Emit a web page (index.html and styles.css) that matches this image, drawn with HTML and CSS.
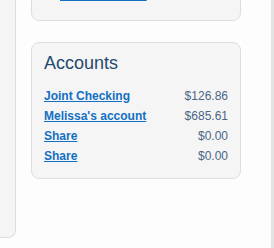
FILE: index.html
```html
<!DOCTYPE html>
<html>
<head>
<meta charset="utf-8">
<link rel="stylesheet" href="styles.css">
</head>
<body>
<div class="page">
  <aside class="sidebar"></aside>
  <main class="main">
    <section class="card card-top">
      <a class="link" href="#">Transfer Funds</a>
    </section>
    <section class="card accounts">
      <h2 class="title">Accounts</h2>
      <ul class="list">
        <li class="row"><a class="link" href="#">Joint Checking</a><span class="amount">$126.86</span></li>
        <li class="row"><a class="link" href="#">Melissa's account</a><span class="amount">$685.61</span></li>
        <li class="row"><a class="link" href="#">Share</a><span class="amount">$0.00</span></li>
        <li class="row"><a class="link" href="#">Share</a><span class="amount">$0.00</span></li>
      </ul>
    </section>
  </main>
  <div class="edge"></div>
</div>
</body>
</html>
```
FILE: styles.css
```css
html, body {
  margin: 0;
  padding: 0;
  background: #fdfdfd;
}
body {
  font-family: "Liberation Sans", Arial, Helvetica, sans-serif;
  width: 274px;
  height: 248px;
  overflow: hidden;
}
.page {
  display: flex;
  align-items: flex-start;
  height: 248px;
}
.sidebar {
  width: 15px;
  height: 237px;
  background: #f5f5f5;
  border-right: 1px solid #dcdcdc;
  border-bottom: 1px solid #dcdcdc;
  border-bottom-right-radius: 8px;
  flex: none;
}
.main {
  width: 210px;
  margin-left: 15px;
  flex: none;
}
.card {
  background: #f5f5f5;
  border: 1px solid #dedede;
  border-radius: 8px;
  box-sizing: border-box;
}
.card-top {
  margin-top: -27px;
  padding: 11px 12px 15px 28px;
  line-height: 20px;
  font-size: 12px;
}
.accounts {
  margin-top: 21px;
  padding: 10px 12px 12px 12px;
}
.title {
  margin: 0 0 13px 0;
  font-size: 18px;
  line-height: 20px;
  font-weight: normal;
  color: #24496f;
}
.list {
  list-style: none;
  margin: 0;
  padding: 0;
}
.row {
  display: flex;
  justify-content: space-between;
  font-size: 12px;
  line-height: 20px;
}
.link {
  color: #1170c4;
  font-weight: bold;
  text-decoration: underline;
}
.amount {
  color: #4a6685;
}
.edge {
  margin-left: auto;
  width: 3px;
  height: 248px;
  background: #e3e3e3;
  flex: none;
}
```
